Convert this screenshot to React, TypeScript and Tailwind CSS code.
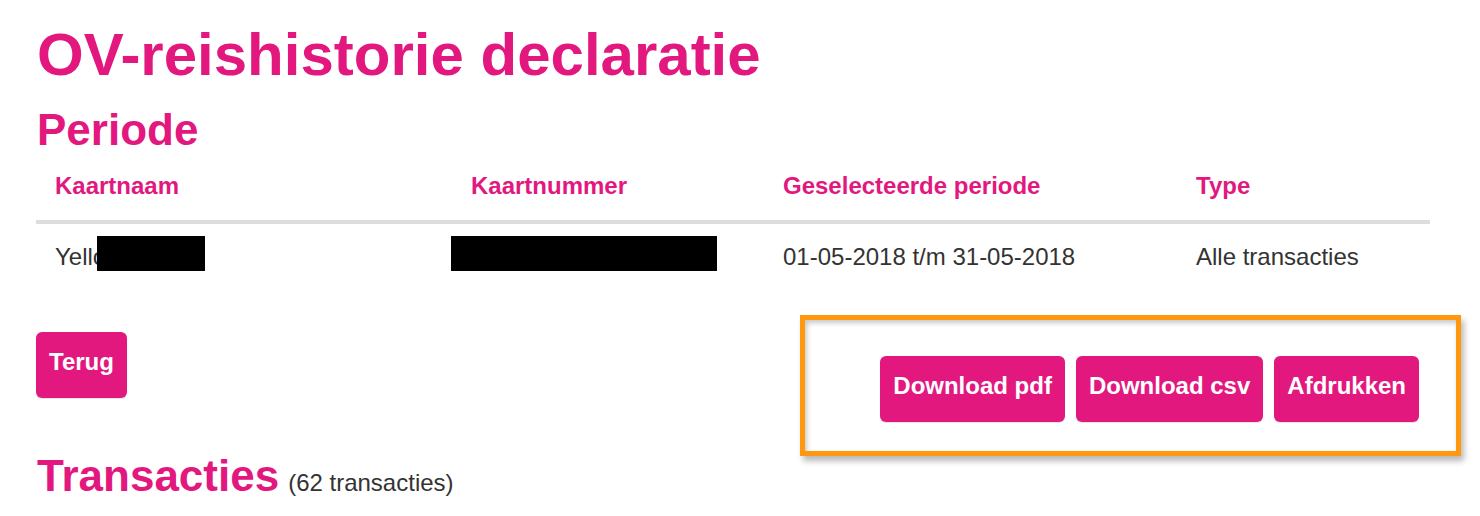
const pink = "text-[#e2187f]";

function PinkButton({ label }: { label: string }) {
  return (
    <button className="rounded-md bg-[#e2187f] px-[13px] pb-[22px] pt-[16px] text-[24px] font-bold leading-[28px] text-white shadow-[0_1px_1px_rgba(0,0,0,0.12)]">
      {label}
    </button>
  );
}

export default function App() {
  return (
    <div className="min-h-[516px] bg-white font-['Liberation_Sans',Arial,sans-serif] text-[#333]">
      <div className="ml-[36px] w-[1394px]">
        <h1 className={`mt-[22px] pl-px text-[60px] font-bold leading-[66px] ${pink}`}>
          OV-reishistorie declaratie
        </h1>
        <h2 className={`mt-[18px] pl-px text-[44px] font-bold leading-[48px] ${pink}`}>Periode</h2>

        {/* period table */}
        <div className="grid grid-cols-[416px_312px_413px_253px] text-[24px] leading-[28px]">
          {["Kaartnaam", "Kaartnummer", "Geselecteerde periode", "Type"].map((h) => (
            <div
              key={h}
              className={`border-b-4 border-[#dddddd] pb-[20px] pl-[19px] pt-[18px] font-bold ${pink}`}
            >
              {h}
            </div>
          ))}
          <div className="pb-[19px] pl-[19px] pt-[19px]">
            <div className="relative">
              Yello
              <span className="absolute left-[42px] top-[-7px] h-[35px] w-[108px] bg-black" />
            </div>
          </div>
          <div className="pb-[19px] pl-[19px] pt-[19px]">
            <div className="relative h-[28px]">
              <span className="absolute left-[-20px] top-[-7px] h-[35px] w-[266px] bg-black" />
            </div>
          </div>
          <div className="pb-[19px] pl-[19px] pt-[19px]">01-05-2018 t/m 31-05-2018</div>
          <div className="pb-[19px] pl-[19px] pt-[19px]">Alle transacties</div>
        </div>

        {/* actions */}
        <div className="mt-[42px] flex items-start justify-between">
          <PinkButton label="Terug" />
          <div className="relative mr-[11px] mt-[24px] flex items-start gap-[11px]">
            <div className="pointer-events-none absolute bottom-[-34px] left-[-80px] right-[-42px] top-[-41px] border-[5px] border-[#ff980f] shadow-[3px_5px_6px_rgba(0,0,0,0.28),inset_2px_3px_5px_rgba(0,0,0,0.22)]" />
            <PinkButton label="Download pdf" />
            <PinkButton label="Download csv" />
            <PinkButton label="Afdrukken" />
          </div>
        </div>

        <div className="mt-[30px] flex items-baseline gap-[9px] pl-px">
          <h2 className={`text-[44px] font-bold leading-[48px] ${pink}`}>Transacties</h2>
          <span className="text-[24px]">(62 transacties)</span>
        </div>
      </div>
    </div>
  );
}
